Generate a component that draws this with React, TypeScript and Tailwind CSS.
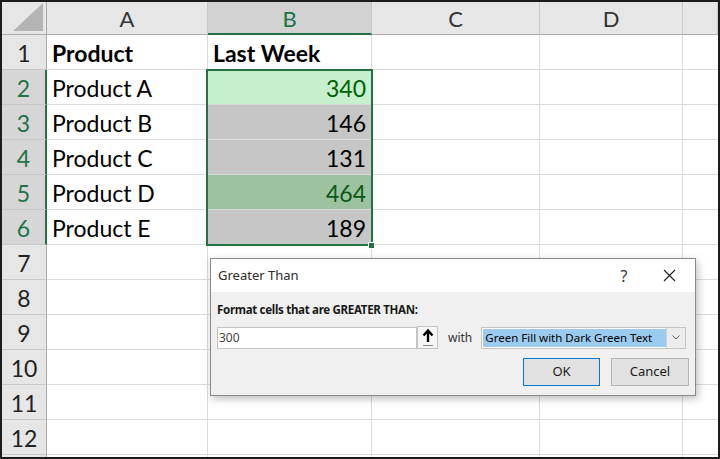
const rows = [
  { n: 1, a: 'Product', b: 'Last Week', header: true },
  { n: 2, a: 'Product A', b: '340', fill: 'bg-[#c6efce]', text: 'text-[#006100]' },
  { n: 3, a: 'Product B', b: '146', fill: 'bg-[#c6c6c6]', text: 'text-black' },
  { n: 4, a: 'Product C', b: '131', fill: 'bg-[#c6c6c6]', text: 'text-black' },
  { n: 5, a: 'Product D', b: '464', fill: 'bg-[#9cc2a2]', text: 'text-[#0b5a12]' },
  { n: 6, a: 'Product E', b: '189', fill: 'bg-[#c6c6c6]', text: 'text-black' },
];

const columns = ['A', 'B', 'C', 'D', ''];

const CloseIcon = () => (
  <svg width="13" height="13" viewBox="0 0 13 13" fill="none" stroke="#1f1f1f" strokeWidth="1.1">
    <path d="M1 1 L12 12 M12 1 L1 12" />
  </svg>
);

const RangeIcon = () => (
  <svg width="14" height="19" viewBox="0 0 14 19" fill="none">
    <path d="M7 3 V14" stroke="#000" strokeWidth="2.4" />
    <path d="M2.5 7.5 L7 2.5 L11.5 7.5" stroke="#000" strokeWidth="2.4" strokeLinejoin="miter" />
    <path d="M2 17.5 H12" stroke="#8a8a8a" strokeWidth="1" />
  </svg>
);

const ChevronDown = () => (
  <svg width="8" height="5" viewBox="0 0 8 5" fill="none" stroke="#606060" strokeWidth="1">
    <path d="M0.5 0.5 L4 4 L7.5 0.5" />
  </svg>
);

function Dialog() {
  return (
    <div className="absolute left-[208px] top-[256px] flex h-[138px] w-[486px] flex-col border border-[#8a8a8a] bg-[#f0f0f0] font-['Noto_Sans',sans-serif] text-[#1a1a1a] shadow-[2px_3px_8px_rgba(0,0,0,0.25)]">
      <div className="flex h-[33px] items-center bg-white pl-[7px] pr-[3px] text-[13px] text-[#2b2b2b]">
        <span>Greater Than</span>
        <span className="ml-auto flex w-[30px] justify-center text-[16px] text-[#333]">?</span>
        <span className="ml-[7px] flex w-[46px] justify-center">
          <CloseIcon />
        </span>
      </div>
      <div className="px-[6px] pt-[10px]">
        <p className="text-[11.5px] leading-4 font-bold tracking-[-0.3px]">Format cells that are GREATER THAN:</p>
        <div className="mt-[8px] flex items-center">
          <div className="flex h-[22px] w-[200px] items-center border border-[#c4c4c4] bg-white pl-[1px] text-[12px] text-[#444]">
            300
          </div>
          <div className="flex h-[23px] w-[21px] items-center justify-center border border-[#c4c4c4] bg-[#f6f6f6]">
            <RangeIcon />
          </div>
          <span className="ml-[10px] text-[12px] text-[#333]">with</span>
          <div className="ml-[9px] flex h-[22px] w-[205px] items-center border border-[#c4c4c4] bg-white">
            <div className="ml-[1px] flex h-[18px] flex-1 items-center bg-[#9ccbf0] pl-[2px] text-[11.5px] text-black">
              Green Fill with Dark Green Text
            </div>
            <div className="flex h-full w-[19px] items-center justify-center border-l border-[#d0d0d0] bg-[#ececec]">
              <ChevronDown />
            </div>
          </div>
        </div>
        <div className="mt-[9px] flex justify-end gap-[11px]">
          <button className="h-[28px] w-[77px] border border-[#0078d7] bg-[#e1e1e1] text-[13px] text-[#1a1a1a]">
            OK
          </button>
          <button className="h-[28px] w-[78px] border border-[#b5b5b5] bg-[#e1e1e1] text-[13px] text-[#1a1a1a]">
            Cancel
          </button>
        </div>
      </div>
    </div>
  );
}

export default function App() {
  return (
    <div className="h-[459px] w-[720px] overflow-hidden border-2 border-[#1c1c1c] bg-white font-['Lato','Noto_Sans',sans-serif]">
      <div className="relative h-full w-full">
        <div className="grid h-full grid-cols-[45px_161px_164px_168px_143px_1fr] grid-rows-[33px_repeat(12,35px)_1fr]">
          {/* corner */}
          <div className="relative border-r border-b border-[#ababab] bg-[#e6e6e6]">
            <svg className="absolute right-[3px] bottom-[3px]" width="30" height="28" viewBox="0 0 30 28">
              <path d="M30 0 V28 H0 Z" fill="#b4b4b4" />
            </svg>
          </div>
          {columns.map((c) => (
            <div
              key={c || 'e'}
              className={
                c === 'B'
                  ? 'flex items-center justify-center border-r border-b-2 border-r-[#c8c8c8] border-b-[#217346] bg-[#d2d2d2] pt-[1px] text-[22px] text-[#217346]'
                  : 'flex items-center justify-center border-r border-b border-r-[#c8c8c8] border-b-[#ababab] bg-[#e6e6e6] text-[22px] text-[#333]'
              }
            >
              {c}
            </div>
          ))}

          {Array.from({ length: 13 }, (_, i) => i + 1).map((n) => {
            const row = rows.find((r) => r.n === n);
            const selected = n >= 2 && n <= 6;
            return [
              <div
                key={`h${n}`}
                className={
                  selected
                    ? 'flex items-center justify-center border-r-2 border-b border-r-[#217346] border-b-[#c8c8c8] bg-[#d6d6d6] pt-[2px] text-[23px] text-[#217346]'
                    : 'flex items-center justify-center border-r border-b border-r-[#ababab] border-b-[#c8c8c8] bg-[#e6e6e6] pt-[2px] text-[23px] text-[#222]'
                }
              >
                {n <= 12 ? n : ''}
              </div>,
              <div
                key={`a${n}`}
                className={`flex items-center border-r border-b border-[#dadada] pt-[3px] pl-[5px] text-[23px] text-black ${row?.header ? 'font-bold' : ''}`}
              >
                {row?.a}
              </div>,
              <div
                key={`b${n}`}
                className={
                  row?.header
                    ? 'flex items-center border-r border-b border-[#dadada] pt-[3px] pl-[5px] text-[23px] font-bold text-black'
                    : `flex items-center justify-end border-r border-b border-[#dadada] pt-[3px] pr-[5px] text-[23px] ${row?.fill ?? ''} ${row?.text ?? ''}`
                }
              >
                {row?.b}
              </div>,
              <div key={`c${n}`} className="border-r border-b border-[#dadada]" />,
              <div key={`d${n}`} className="border-r border-b border-[#dadada]" />,
              <div key={`e${n}`} className="border-b border-[#dadada]" />,
            ];
          })}
        </div>

        {/* selection B2:B6 */}
        <div className="pointer-events-none absolute left-[204px] top-[67px] h-[177px] w-[167px] border-2 border-[#217346]" />
        <div className="absolute left-[366px] top-[240px] h-[7px] w-[7px] border border-white bg-[#217346]" />

        <Dialog />
      </div>
    </div>
  );
}
